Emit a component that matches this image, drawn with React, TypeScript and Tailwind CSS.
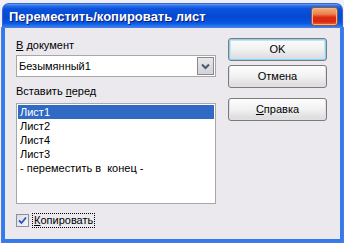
import React from "react";

const font = { fontFamily: '"Liberation Sans", Arial, sans-serif' };

function XPButton({ children, def }: { children: React.ReactNode; def?: boolean }) {
  return (
    <div
      className={`h-[23px] w-[99px] rounded-[3px] border border-[#7b7b7b] flex items-center justify-center text-[11px] text-black bg-gradient-to-b from-[#fdfdfd] via-[#f1f1f1] to-[#d9d9dc] ${
        def ? "shadow-[inset_0_0_0_1px_#8fd0f3,inset_0_0_0_2px_#c2e6f8]" : "shadow-[inset_0_-1px_0_1px_#e0e0e3]"
      }`}
    >
      {children}
    </div>
  );
}

export default function App() {
  return (
    <div className="w-[344px] h-[243px] bg-[#eef0f6] pt-[3px] pl-[2px] overflow-hidden" style={font}>
      <div className="w-[341px] h-[239px] flex flex-col">
        {/* Title bar */}
        <div className="h-[25px] rounded-t-[7px] bg-[linear-gradient(to_bottom,#6aa0f4_0%,#2a6fe8_8%,#0a52dc_20%,#0548d2_55%,#0a56e2_80%,#1f78f4_92%,#3a8ff8_100%)] flex items-center pl-[6px] pr-[4px] border-x border-t border-[#3e62cf]">
          <span
            className="flex-1 text-white font-bold text-[13px] leading-none"
            style={{ textShadow: "1px 1px 0 #0a1f6e" }}
          >
            Переместить/копировать лист
          </span>
          <div className="w-[27px] h-[19px] rounded-[3px] border border-[#8c5a40] bg-[linear-gradient(to_bottom,#f2b07a_0%,#ea8450_35%,#dc2a10_55%,#d82a12_80%,#e86a3a_100%)] shadow-[inset_0_0_0_1px_#f6b48c]" />
        </div>
        {/* Client */}
        <div className="flex-1 bg-[#ebe9ee] border-x-[3px] border-b-[3px] border-[#2f7cf0] flex text-[11px] text-black shadow-[0_0_0_1px_#5a78d8]">
          <div className="w-[211px] pl-[11px] pt-[11px] flex flex-col">
            <div className="leading-[13px]">
              <span className="underline">В</span> документ
            </div>
            <div className="mt-[3px] h-[22px] w-[200px] border border-[#a7a7a7] bg-white flex items-center pl-[2px] pr-[1px]">
              <span className="flex-1 pt-[1px]">Безымянный1</span>
              <div className="w-[17px] h-[18px] border border-[#8a8a8e] bg-gradient-to-b from-[#e8e8ec] to-[#d2d2d8] flex items-center justify-center">
                <svg width="9" height="7" viewBox="0 0 9 7">
                  <path d="M1 1.5 L4.5 5 L8 1.5" stroke="#4b5670" strokeWidth="2" fill="none" />
                </svg>
              </div>
            </div>
            <div className="mt-[8px] leading-[13px]">
              Вставить <span className="underline">п</span>еред
            </div>
            <div className="mt-[5px] h-[101px] w-[200px] border border-[#a7a7a7] bg-white p-[1px] flex flex-col">
              <div className="h-[14px] leading-[14px] bg-[#316ac5] text-white pl-[2px]">Лист1</div>
              <div className="h-[14px] leading-[14px] pl-[2px]">Лист2</div>
              <div className="h-[14px] leading-[14px] pl-[2px]">Лист4</div>
              <div className="h-[14px] leading-[14px] pl-[2px]">Лист3</div>
              <div className="h-[14px] leading-[14px] pl-[2px] whitespace-pre">- переместить в  конец -</div>
            </div>
            <div className="mt-[9px] flex items-center">
              <div className="w-[13px] h-[13px] border border-[#8a8f9a] bg-gradient-to-br from-[#dcdce0] to-[#f6f6f8] flex items-center justify-center">
                <svg width="9" height="9" viewBox="0 0 9 9">
                  <path d="M1 4.5 L3.5 7 L8 1.5" stroke="#2a53c4" strokeWidth="1.8" fill="none" />
                </svg>
              </div>
              <div className="ml-[3px] border border-dotted border-black px-[1px] leading-[13px]">
                <span className="underline">К</span>опировать
              </div>
            </div>
          </div>
          <div className="pl-[12px] pt-[10px] flex flex-col">
            <XPButton def>OK</XPButton>
            <div className="mt-[4px]">
              <XPButton>Отмена</XPButton>
            </div>
            <div className="mt-[10px]">
              <XPButton>
                <span>
                  <span className="underline">С</span>правка
                </span>
              </XPButton>
            </div>
          </div>
        </div>
      </div>
    </div>
  );
}
